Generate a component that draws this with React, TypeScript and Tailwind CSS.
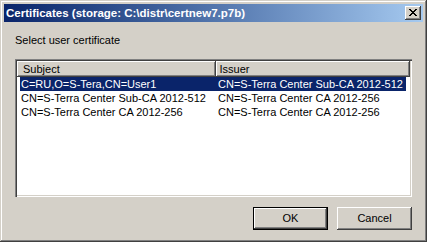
import React from "react";

// ─── Data ─────────────────────────────────────────────────────────────────────
const ROWS = [
  { subject: "C=RU,O=S-Tera,CN=User1", issuer: "CN=S-Terra Center Sub-CA 2012-512" },
  { subject: "CN=S-Terra Center Sub-CA 2012-512", issuer: "CN=S-Terra Center CA 2012-256" },
  { subject: "CN=S-Terra Center CA 2012-256", issuer: "CN=S-Terra Center CA 2012-256" },
];

const raised =
  "shadow-[inset_-1px_-1px_0_#404040,inset_1px_1px_0_#ffffff,inset_-2px_-2px_0_#808080,inset_2px_2px_0_#d4d0c8]";

function CloseIcon() {
  return (
    <svg width="16" height="14" viewBox="0 0 16 14" shapeRendering="crispEdges">
      <path d="M4 3h2v1h1v1h2V4h1V3h2v1h-1v1h-1v1h-1v1h1v1h1v1h1v1h-2V9H9V8H7v1H6v1H4V9h1V8h1V7h1V6H6V5H5V4H4z" fill="#000" />
    </svg>
  );
}

function DialogButton({ label, isDefault }: { label: string; isDefault?: boolean }) {
  return (
    <button
      className={
        isDefault
          ? "w-[75px] h-[23px] border border-black bg-[#d4d0c8] text-[11px] text-black shadow-[inset_-1px_-1px_0_#404040,inset_1px_1px_0_#ffffff,inset_-2px_-2px_0_#808080]"
          : `w-[75px] h-[23px] bg-[#d4d0c8] text-[11px] text-black ${raised}`
      }
    >
      {label}
    </button>
  );
}

// ─── Component ────────────────────────────────────────────────────────────────
export default function App() {
  return (
    <div className="w-[427px] h-[242px] p-[4px] bg-[#d4d0c8] flex flex-col font-['Liberation_Sans',Arial,sans-serif] text-[11px] text-black shadow-[inset_-1px_-1px_0_#404040,inset_1px_1px_0_#d4d0c8,inset_-2px_-2px_0_#808080,inset_2px_2px_0_#ffffff]">
      {/* Title bar */}
      <div className="h-[18px] flex items-center justify-between pl-[2px] pr-[2px] bg-linear-to-r from-[#0a246a] to-[#a6caf0]">
        <span className="text-white font-bold text-[11.5px] leading-[18px]">
          Certificates (storage: C:\distr\certnew7.p7b)
        </span>
        <button className={`w-[16px] h-[14px] bg-[#d4d0c8] flex items-center justify-center ${raised}`}>
          <CloseIcon />
        </button>
      </div>

      {/* Body */}
      <div className="flex-1 flex flex-col px-[11px]">
        <div className="mt-[12px] h-[13px] leading-[13px]">Select user certificate</div>

        {/* List view */}
        <div className="mt-[12px] h-[138px] p-[2px] bg-white shadow-[inset_1px_1px_0_#808080,inset_2px_2px_0_#404040,inset_-1px_-1px_0_#ffffff,inset_-2px_-2px_0_#d4d0c8]">
          <div className="flex h-[16px] leading-[16px]">
            <div className="w-[199px] pl-[6px] bg-[#d4d0c8] shadow-[inset_-1px_-1px_0_#404040,inset_1px_1px_0_#ffffff,inset_-2px_-2px_0_#808080]">
              Subject
            </div>
            <div className="w-[195px] pl-[4px] bg-[#d4d0c8] shadow-[inset_-1px_-1px_0_#404040,inset_1px_1px_0_#ffffff,inset_-2px_-2px_0_#808080]">
              Issuer
            </div>
          </div>
          <div className="flex flex-col pl-[3px] pr-[4px]">
            {ROWS.map((r, i) => (
              <div
                key={i}
                className={`flex h-[14px] leading-[14px] ${i === 0 ? "bg-[#0a246a] text-white" : ""}`}
              >
                <div className="w-[196px] pl-[1px] whitespace-nowrap">{r.subject}</div>
                <div className="pl-[2px] whitespace-nowrap">{r.issuer}</div>
              </div>
            ))}
          </div>
        </div>

        {/* Footer buttons */}
        <div className="mt-[10px] flex justify-end gap-[9px]">
          <DialogButton label="OK" isDefault />
          <DialogButton label="Cancel" />
        </div>
      </div>
    </div>
  );
}
